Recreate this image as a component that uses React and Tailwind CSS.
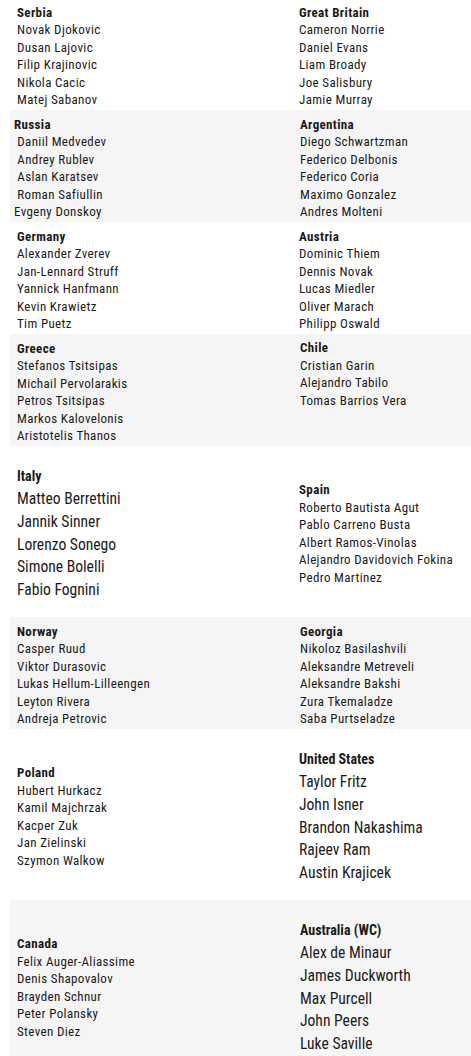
import React from "react";

const rows = [
  {
    h: "h-[110px] pt-[2px]",
    bg: false,
    left: { country: "Serbia", players: ["Novak Djokovic", "Dusan Lajovic", "Filip Krajinovic", "Nikola Cacic", "Matej Sabanov"] },
    right: { country: "Great Britain", players: ["Cameron Norrie", "Daniel Evans", "Liam Broady", "Joe Salisbury", "Jamie Murray"] },
  },
  {
    h: "h-[112px] pt-[4px]",
    bg: true,
    left: { country: "Russia", players: ["\u00a0Daniil Medvedev", "\u00a0Andrey Rublev", "\u00a0Aslan Karatsev", "\u00a0Roman Safiullin", "Evgeny Donskoy"], tight: true },
    right: { country: "Argentina", players: ["Diego Schwartzman", "Federico Delbonis", "Federico Coria", "Maximo Gonzalez", "Andres Molteni"] },
  },
  {
    h: "h-[112px] pt-[4px]",
    bg: false,
    left: { country: "Germany", players: ["Alexander Zverev", "Jan-Lennard Struff", "Yannick Hanfmann", "Kevin Krawietz", "Tim Puetz"] },
    right: { country: "Austria", players: ["Dominic Thiem", "Dennis Novak", "Lucas Miedler", "Oliver Marach", "Philipp Oswald"] },
  },
  {
    h: "h-[112px] pt-[4px]",
    bg: true,
    left: { country: "Greece", players: ["Stefanos Tsitsipas", "Michail Pervolarakis", "Petros Tsitsipas", "Markos Kalovelonis", "Aristotelis Thanos"] },
    right: { country: "Chile", players: ["Cristian Garin", "Alejandro Tabilo", "Tomas Barrios Vera"], top: true },
  },
  {
    h: "h-[171px] pt-[4px]",
    bg: false,
    left: { country: "Italy", players: ["Matteo Berrettini", "Jannik Sinner", "Lorenzo Sonego", "Simone Bolelli", "Fabio Fognini"], big: true },
    right: { country: "Spain", players: ["Roberto Bautista Agut", "Pablo Carreno Busta", "Albert Ramos-Vinolas", "Alejandro Davidovich Fokina", "Pedro Martinez"] },
  },
  {
    h: "h-[112px] pt-[4px]",
    bg: true,
    left: { country: "Norway", players: ["Casper Ruud", "Viktor Durasovic", "Lukas Hellum-Lilleengen", "Leyton Rivera", "Andreja Petrovic"] },
    right: { country: "Georgia", players: ["Nikoloz Basilashvili", "Aleksandre Metreveli", "Aleksandre Bakshi", "Zura Tkemaladze", "Saba Purtseladze"] },
  },
  {
    h: "h-[171px] pt-[4px]",
    bg: false,
    left: { country: "Poland", players: ["Hubert Hurkacz", "Kamil Majchrzak", "Kacper Zuk", "Jan Zielinski", "Szymon Walkow"] },
    right: { country: "United States", players: ["Taylor Fritz", "John Isner", "Brandon Nakashima", "Rajeev Ram", "Austin Krajicek"], big: true },
  },
  {
    h: "h-[171px] pt-[4px]",
    bg: true,
    left: { country: "Canada", players: ["Felix Auger-Aliassime", "Denis Shapovalov", "Brayden Schnur", "Peter Polansky", "Steven Diez"] },
    right: { country: "Australia (WC)", players: ["Alex de Minaur", "James Duckworth", "Max Purcell", "John Peers", "Luke Saville"], big: true },
  },
];

const Cell = ({ data, className }) => {
  const size = data.big
    ? "text-[15.6px] leading-[22.75px]"
    : "text-[13px] leading-[17.5px] tracking-[0.35px]";
  return (
    <div className={`${className} flex ${data.top ? "items-start pt-[1px]" : "items-center"}`}>
      <div className={`${size} [font-stretch:75%]`}>
        <div className={`font-bold ${data.big ? "text-[14px]" : ""}`}>{data.country}</div>
        {data.players.map((p) => (
          <div key={p} className="whitespace-nowrap">{p}</div>
        ))}
      </div>
    </div>
  );
};

export default function App() {
  return (
    <div
      className="w-[471px] overflow-hidden bg-white text-[#1a1a1a]"
      style={{ fontFamily: "'Roboto Condensed', Roboto, 'Liberation Sans', sans-serif" }}
    >
      <div className="ml-[10px]">
        {rows.map((r, i) => (
          <div key={i} className={`flex box-border ${r.h} ${r.bg ? "bg-[#f5f5f5]" : "bg-white"}`}>
            <Cell data={r.left} className={`w-[284px] shrink-0 ${r.left.tight ? "pl-[4px]" : "pl-[7px]"}`} />
            <Cell data={r.right} className={`flex-1 pl-[5px] ${r.bg ? "border-l border-[#f8f8f8]" : ""}`} />
          </div>
        ))}
      </div>
    </div>
  );
}
